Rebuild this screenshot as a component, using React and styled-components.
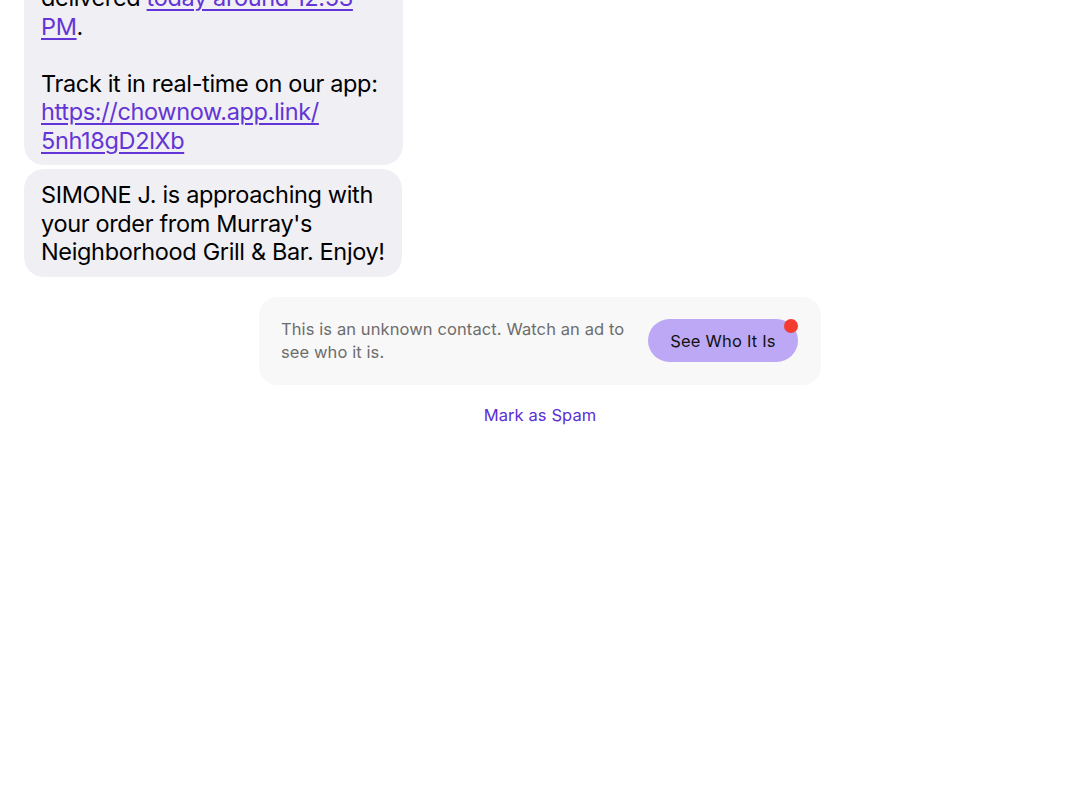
import React from "react";
import styled, { createGlobalStyle } from "styled-components";

const GlobalStyle = createGlobalStyle`
  html, body {
    margin: 0;
    padding: 0;
    background: #ffffff;
    font-family: Inter, "Liberation Sans", sans-serif;
    overflow: hidden;
  }
`;

const Screen = styled.div`
  width: 1080px;
  height: 808px;
  overflow: hidden;
`;

// thread is scrolled: the first bubble starts above the viewport
const Thread = styled.div`
  margin-top: -142px;
  padding: 0 24px;
  display: flex;
  flex-direction: column;
  align-items: flex-start;
  gap: 4px;
`;

const Bubble = styled.div`
  box-sizing: border-box;
  width: ${(p) => (p.$wide ? "379px" : "fit-content")};
  padding: 12px 17px 10px;
  background: #f0eff4;
  border-radius: 20px;
  color: #000;
  font-size: 23.5px;
  line-height: 28.5px;
  letter-spacing: -0.35px;
  white-space: nowrap;
`;

const Link = styled.a`
  color: #6334d6;
  text-decoration: underline;
  text-decoration-thickness: 1.5px;
  text-underline-offset: 3px;
`;

const Notice = styled.div`
  box-sizing: border-box;
  width: 562px;
  margin: 20px auto 0;
  padding: 0 23px 0 22px;
  height: 88px;
  background: #f8f8f8;
  border-radius: 18px;
  display: flex;
  align-items: center;
  justify-content: space-between;
  gap: 18px;
`;

const NoticeText = styled.p`
  margin: 0;
  color: #6d6d6d;
  font-size: 16.5px;
  line-height: 23px;
  letter-spacing: 0.1px;
`;

const RevealButton = styled.button`
  position: relative;
  flex: none;
  width: 150px;
  height: 43px;
  border: none;
  border-radius: 22px;
  background: #bca8f4;
  color: #111;
  font-family: inherit;
  font-size: 16.5px;
  letter-spacing: 0.2px;
  cursor: pointer;
`;

const Dot = styled.span`
  position: absolute;
  top: 0;
  right: 0;
  width: 14px;
  height: 14px;
  border-radius: 50%;
  background: #f43b30;
`;

const SpamLink = styled.div`
  margin-top: 20px;
  text-align: center;
  color: #5b2fd2;
  font-size: 16.5px;
  letter-spacing: 0.1px;
`;

export default function App() {
  return (
    <Screen>
      <GlobalStyle />
      <Thread>
        <Bubble $wide>
          Your order from Murray's
          <br />
          Neighborhood Grill & Bar is on its
          <br />
          way and is expected to be
          <br />
          picked up by SIMONE J. and
          <br />
          delivered <Link href="#">today around 12:53</Link>
          <br />
          <Link href="#">PM</Link>.
          <br />
          <br />
          Track it in real-time on our app:
          <br />
          <Link href="#">https://chownow.app.link/</Link>
          <br />
          <Link href="#">5nh18gD2lXb</Link>
        </Bubble>
        <Bubble>
          SIMONE J. is approaching with
          <br />
          your order from Murray's
          <br />
          Neighborhood Grill & Bar. Enjoy!
        </Bubble>
      </Thread>
      <Notice>
        <NoticeText>
          This is an unknown contact. Watch an ad to
          <br />
          see who it is.
        </NoticeText>
        <RevealButton>
          See Who It Is
          <Dot />
        </RevealButton>
      </Notice>
      <SpamLink>Mark as Spam</SpamLink>
    </Screen>
  );
}
